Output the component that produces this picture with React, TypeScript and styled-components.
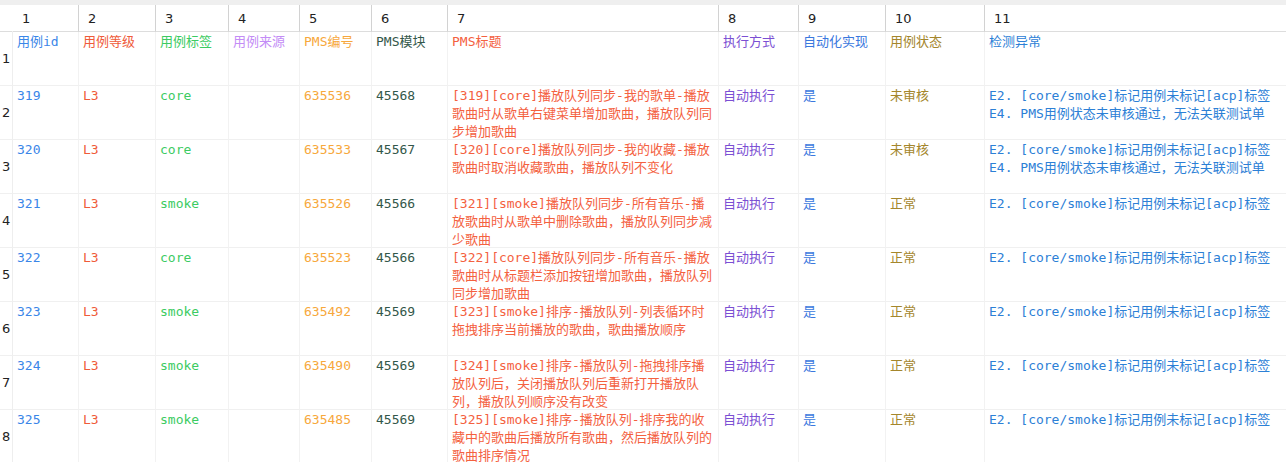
import React from "react";
import styled, { createGlobalStyle } from "styled-components";

const Global = createGlobalStyle`
  html, body {
    margin: 0;
    padding: 0;
    background: #ffffff;
    overflow: hidden;
  }
  * { box-sizing: border-box; }
`;

const COLS = [13, 66, 77, 73, 71, 72, 76, 271, 80, 87, 99, 420];

const COLORS = [
  "#3a86e8",
  "#ef5b3a",
  "#3ccb62",
  "#c38cf6",
  "#f7a83c",
  "#33574a",
  "#f4613f",
  "#7b4fd3",
  "#3a78de",
  "#a4862c",
  "#2c80d6",
];

const Viewport = styled.div`
  width: 100vw;
  height: 100vh;
  overflow: hidden;
  background: #ffffff;
`;

const TopStrip = styled.div`
  height: 5px;
  width: 100%;
  background: #efefef;
`;

const Grid = styled.div`
  display: grid;
  grid-template-columns: ${COLS.map((c) => `${c}px`).join(" ")};
  width: ${COLS.reduce((a, b) => a + b, 0)}px;
  font-family: "DejaVu Sans Mono", "Noto Sans CJK SC", monospace;
  font-size: 13px;
`;

const HeadCell = styled.div<{ $first?: boolean }>`
  height: 27px;
  padding-left: 9px;
  display: flex;
  align-items: center;
  font-family: "DejaVu Sans", sans-serif;
  font-size: 13px;
  color: #222222;
  border-bottom: 1px solid #dddddd;
  border-right: ${(p) => (p.$first ? "1px solid transparent" : "1px solid #d2d2d2")};
`;

const RowNum = styled.div`
  height: 54px;
  padding-left: 2px;
  display: flex;
  align-items: center;
  font-family: "DejaVu Sans", sans-serif;
  font-size: 13px;
  color: #222222;
  border-right: 1px solid #eeeeee;
  border-bottom: 1px solid #f0f0f0;
`;

const Cell = styled.div<{ $color: string; $nowrap?: boolean }>`
  height: 54px;
  padding: 1px 4px 0 4px;
  line-height: 18px;
  color: ${(p) => p.$color};
  white-space: ${(p) => (p.$nowrap ? "pre" : "normal")};
  overflow: hidden;
  border-right: 1px solid #f2f2f2;
  border-bottom: 1px solid #f0f0f0;
  word-break: normal;
  line-break: strict;
`;

type Row = string[];

const LABELS: Row = [
  "用例id",
  "用例等级",
  "用例标签",
  "用例来源",
  "PMS编号",
  "PMS模块",
  "PMS标题",
  "执行方式",
  "自动化实现",
  "用例状态",
  "检测异常",
];

const E2 = "E2. [core/smoke]标记用例未标记[acp]标签";
const E4 = "E4. PMS用例状态未审核通过，无法关联测试单";

const ROWS: Row[] = [
  ["319", "L3", "core", "", "635536", "45568", "[319][core]播放队列同步-我的歌单-播放歌曲时从歌单右键菜单增加歌曲，播放队列同步增加歌曲", "自动执行", "是", "未审核", `${E2}\n${E4}`],
  ["320", "L3", "core", "", "635533", "45567", "[320][core]播放队列同步-我的收藏-播放歌曲时取消收藏歌曲，播放队列不变化", "自动执行", "是", "未审核", `${E2}\n${E4}`],
  ["321", "L3", "smoke", "", "635526", "45566", "[321][smoke]播放队列同步-所有音乐-播放歌曲时从歌单中删除歌曲，播放队列同步减少歌曲", "自动执行", "是", "正常", E2],
  ["322", "L3", "core", "", "635523", "45566", "[322][core]播放队列同步-所有音乐-播放歌曲时从标题栏添加按钮增加歌曲，播放队列同步增加歌曲", "自动执行", "是", "正常", E2],
  ["323", "L3", "smoke", "", "635492", "45569", "[323][smoke]排序-播放队列-列表循环时拖拽排序当前播放的歌曲，歌曲播放顺序", "自动执行", "是", "正常", E2],
  ["324", "L3", "smoke", "", "635490", "45569", "[324][smoke]排序-播放队列-拖拽排序播放队列后，关闭播放队列后重新打开播放队列，播放队列顺序没有改变", "自动执行", "是", "正常", E2],
  ["325", "L3", "smoke", "", "635485", "45569", "[325][smoke]排序-播放队列-排序我的收藏中的歌曲后播放所有歌曲，然后播放队列的歌曲排序情况", "自动执行", "是", "正常", E2],
];

export default function App() {
  const all: Row[] = [LABELS, ...ROWS];
  return (
    <Viewport>
      <Global />
      <TopStrip />
      <Grid>
        <HeadCell $first />
        {LABELS.map((_, i) => (
          <HeadCell key={`h${i}`}>{i + 1}</HeadCell>
        ))}
        {all.map((row, r) => (
          <React.Fragment key={`r${r}`}>
            <RowNum>{r + 1}</RowNum>
            {row.map((v, c) => (
              <Cell key={`c${r}-${c}`} $color={COLORS[c]} $nowrap={c === 10}>
                {v}
              </Cell>
            ))}
          </React.Fragment>
        ))}
      </Grid>
    </Viewport>
  );
}
